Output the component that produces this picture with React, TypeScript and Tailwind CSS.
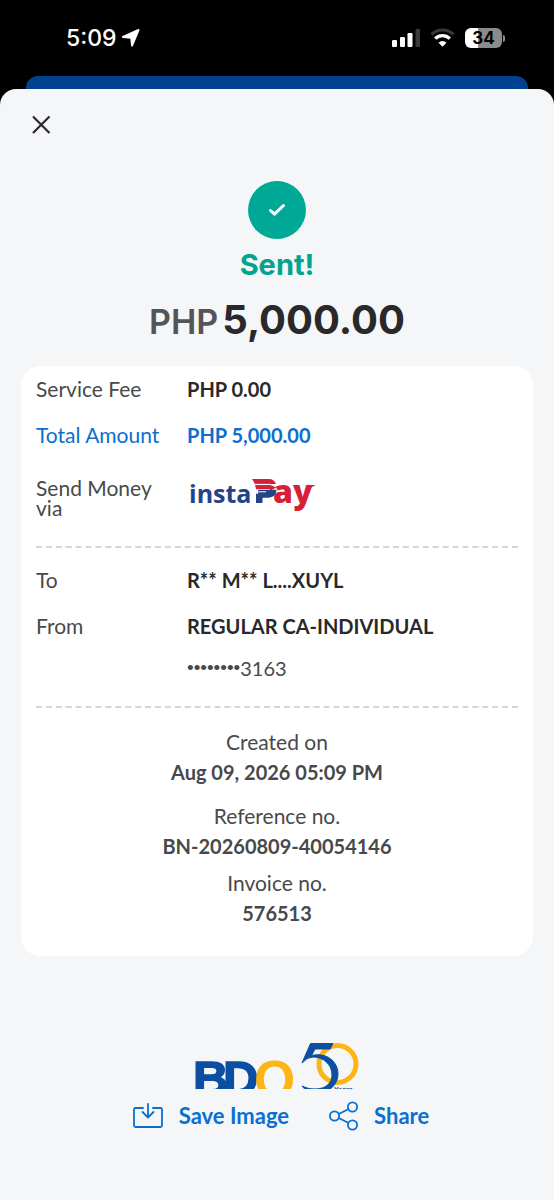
import type { ReactNode } from "react"

interface DetailRowProps {
  label: string
  children: ReactNode
  highlight?: boolean
}

function StatusBar() {
  return (
    <div className="flex h-[76px] items-center justify-between pl-[66px] pr-[49px] text-white">
      <div className="flex items-center gap-1">
        <span className="font-['Inter',sans-serif] text-[23px] font-medium leading-6">5:09</span>
        <svg width="20" height="20" viewBox="0 0 20 20" fill="currentColor" stroke="currentColor" strokeWidth="2" strokeLinejoin="round" aria-hidden="true">
          <path d="M17.500 2L11 17.500L10.300 9.800L2 9Z" />
        </svg>
      </div>
      <div className="flex items-center gap-[10px]">
        <svg width="28" height="20" viewBox="0 0 28 20" aria-label="Signal">
          <rect x="0" y="12" width="5" height="7" rx="1.200" fill="#fff" />
          <rect x="8" y="9" width="5" height="10" rx="1.200" fill="#fff" />
          <rect x="15.500" y="5" width="5" height="14" rx="1.200" fill="#fff" />
          <rect x="23.500" y="1" width="4.500" height="18" rx="1.200" fill="#3a3a3a" />
        </svg>
        <svg width="25" height="20" viewBox="0 0 25 20" fill="none" aria-label="Wi-Fi">
          <path d="M1.500 6.500a16 16 0 0 1 22 0" stroke="#3a3a3a" strokeWidth="3" />
          <path d="M5.200 10.600a10.500 10.500 0 0 1 14.600 0" stroke="#fff" strokeWidth="3.200" />
          <path d="M8.500 14.700a5.800 5.800 0 0 1 8 0l-4 4.100Z" fill="#fff" />
        </svg>
        <div className="flex items-center gap-px">
          <div className="flex h-[20px] w-[37px] items-center justify-center rounded-[6px] bg-linear-to-r from-white from-34% to-[#8b8b8b] to-34% font-['Inter',sans-serif] text-[17px] font-bold leading-5 text-black">
            34
          </div>
          <div className="h-[7px] w-[2px] rounded-r-full bg-[#8b8b8b]" />
        </div>
      </div>
    </div>
  )
}

function DetailRow({ label, children, highlight }: DetailRowProps) {
  return (
    <div className={highlight ? "flex text-[#0a6fd0]" : "flex text-[#48494a]"}>
      <dt className="w-[151px] shrink-0 pr-5 text-[21px] leading-5">{label}</dt>
      <dd className={highlight ? "font-bold" : "font-bold text-[#29292b]"}>{children}</dd>
    </div>
  )
}

function CenteredDetail({ label, value }: { label: string; value: string }) {
  return (
    <div>
      <dt className="text-[21px] leading-[31px]">{label}</dt>
      <dd className="font-bold leading-[31px]">{value}</dd>
    </div>
  )
}

function InstaPayLogo() {
  return (
    <svg className="overflow-visible" width="130" height="40" viewBox="0 0 130 40" role="img" aria-label="instaPay">
      <g fontFamily="'Open Sans', sans-serif" fontWeight="700">
        <text x="2" y="25" fontSize="25" fill="#234486">insta</text>
        <text x="86" y="25" fontSize="32" fontWeight="800" fill="#d6203a">ay</text>
      </g>
      <path d="M119 7h9.500l-6 3.500Z" fill="#d6203a" />
      <path d="M65 1h17q5 0 7 5H68Z" fill="#d6203a" />
      <path d="M68 7h15l-.5-1.500 7 4-7 3.500.5-2H69Z" fill="#d6203a" />
      <path d="M69 6.400h14l5 2" stroke="#fff" strokeWidth="1" fill="none" />
      <path d="M69 11.800h20.500c-.5 6-4 8-9.500 8h-4.500V25H69Z" fill="#234486" />
      <path d="M67 13.800h12" stroke="#fff" strokeWidth="1" />
      <path d="M71 11.300l-5 2.500 5 2.500Z" fill="#fff" />
    </svg>
  )
}

function BankLogo() {
  return (
    <svg width="164" height="48" viewBox="0 0 164 48" role="img" aria-label="BDO 50 Years">
      <g fontFamily="'Liberation Sans', sans-serif" fontWeight="700" fontSize="49">
        <text x="-2" y="54" fill="#0b4ea2" stroke="#0b4ea2" strokeWidth="1.500">B</text>
        <text x="28" y="54" fill="#0b4ea2" stroke="#0b4ea2" strokeWidth="1.500">D</text>
        <text x="59" y="57" fontSize="53" fill="#fdb515">O</text>
      </g>
      <circle cx="142.500" cy="23" r="18.500" fill="none" stroke="#fdb515" strokeWidth="5" />
      <path d="M115.500 2.500H138l-3 5.500H120l-3.500 6.500C131 11 143 20 143 33c0 11-9 19-22 19-7 0-11-3-14-7 4 2 8 3 13 3 11 0 17-6 17-14 0-11-9-18-19-18q-6 0-11 6Z" fill="#0b4ea2" stroke="#0b4ea2" strokeWidth="1" />
      <text x="139" y="51" fontFamily="'Liberation Sans', sans-serif" fontSize="7" fontWeight="700" fill="#0b4ea2">Years</text>
    </svg>
  )
}

function Divider() {
  return <hr className="border-0 border-t-2 border-dashed border-[#d6d6d6]" />
}

export default function App() {
  return (
    <div className="flex min-h-screen flex-col bg-black font-['Lato',sans-serif] text-xl leading-5">
      <StatusBar />
      <div className="mx-[26px] h-[13px] rounded-t-[12px] bg-[#00428f]" />

      <main className="flex grow flex-col rounded-t-[16px] bg-[#f4f6f8] px-[21px]">
        <button type="button" aria-label="Close" className="mt-6 ml-2 size-6 text-[#29292b]">
          <svg width="24" height="24" viewBox="0 0 24 24" fill="none" stroke="currentColor" strokeWidth="2.200">
            <path d="M4 3.500l16.500 16.500M20.500 3.500L4 20" />
          </svg>
        </button>

        <div className="mt-11 flex flex-col items-center">
          <div className="flex size-[58px] items-center justify-center rounded-full bg-[#00a996]">
            <svg width="18" height="14" viewBox="0 0 18 14" fill="none" stroke="#fff" strokeWidth="3" strokeLinecap="round" strokeLinejoin="round">
              <path d="M2.500 7.500l4 3.700L15.500 2.500" />
            </svg>
          </div>
          <h1 className="mt-2 font-['Inter',sans-serif] text-[29px] font-bold leading-9 text-[#00a48f]">Sent!</h1>
          <p className="mt-2.5 flex items-baseline gap-1 font-['Inter',sans-serif] leading-[54px]">
            <span className="text-[34px] font-semibold text-[#545557]">PHP</span>
            <span className="text-[40px] font-bold text-[#29292b]">5,000.00</span>
          </p>
        </div>

        <section className="mt-[17px] rounded-[20px] bg-white px-[15px] pb-[27px] pt-[13px]">
          <dl className="flex flex-col gap-[26px]">
            <DetailRow label="Service Fee">PHP 0.00</DetailRow>
            <DetailRow label="Total Amount" highlight>PHP 5,000.00</DetailRow>
            <div className="mt-[7px]">
              <DetailRow label="Send Money via"><InstaPayLogo /></DetailRow>
            </div>
          </dl>
          <div className="pb-[22px] pt-7"><Divider /></div>
          <dl className="flex flex-col gap-[26px]">
            <DetailRow label="To">R** M** L....XUYL</DetailRow>
            <DetailRow label="From">
              <span>REGULAR CA-INDIVIDUAL</span>
              <span className="mt-[22px] flex items-center font-normal text-[#48494a]">
                <span className="font-['Liberation_Sans',sans-serif] text-[19px]">••••••••</span>
                <span>3163</span>
              </span>
            </DetailRow>
          </dl>
          <div className="pb-[18px] pt-7"><Divider /></div>
          <dl className="text-center text-[#48494a]">
            <CenteredDetail label="Created on" value="Aug 09, 2026 05:09 PM" />
            <div className="pb-[5px] pt-3">
              <CenteredDetail label="Reference no." value="BN-20260809-40054146" />
            </div>
            <CenteredDetail label="Invoice no." value="576513" />
          </dl>
        </section>

        <div className="mt-[85px] flex justify-center">
          <BankLogo />
        </div>
        <div className="mt-3 flex justify-center gap-10 pb-10 pl-2 text-[22px] font-bold text-[#0a6fd0]">
          <button type="button" className="flex items-center gap-4">
            <svg width="30" height="26" viewBox="0 0 30 26" fill="none" stroke="currentColor" strokeWidth="1.800" strokeLinecap="round" strokeLinejoin="round">
              <path d="M10 5H2.500Q1 5 1 6.500v16Q1 24 2.500 24h25q1.500 0 1.500-1.500v-16Q29 5 27.500 5H20M15 1v13M9.500 9l5.500 5.500L20.500 9" />
            </svg>
            Save Image
          </button>
          <button type="button" className="flex items-center gap-4">
            <svg width="29" height="30" viewBox="0 0 29 30" fill="none" stroke="currentColor" strokeWidth="1.800">
              <circle cx="5.500" cy="15" r="4.600" />
              <circle cx="23.500" cy="6" r="4.600" />
              <circle cx="23.500" cy="24" r="4.600" />
              <path d="M9.700 13L19.200 8.200M9.700 17l9.500 4.800" />
            </svg>
            Share
          </button>
        </div>
      </main>
    </div>
  )
}
